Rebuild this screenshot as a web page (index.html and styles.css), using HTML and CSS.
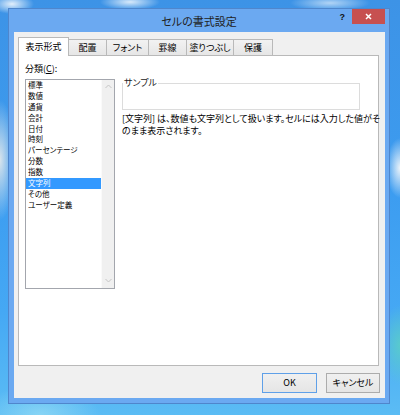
FILE: index.html
```html
<!DOCTYPE html>
<html lang="ja">
<head>
<meta charset="utf-8">
<title>セルの書式設定</title>
<link rel="stylesheet" href="styles.css">
</head>
<body>
<div class="desktop">
  <div class="window">
    <div class="titlebar">
      <div></div>
      <div class="title">セルの書式設定</div>
      <div class="controls">
        <span class="help">?</span>
        <div class="close">
          <svg width="7" height="7" viewBox="0 0 7 7"><path d="M1 1 L6 6 M6 1 L1 6" stroke="#fff" stroke-width="1.5" fill="none"/></svg>
        </div>
      </div>
    </div>
    <div class="client">
      <div class="tabs">
        <div class="tab active w51">表示形式</div>
        <div class="tab w39">配置</div>
        <div class="tab w43">フォント</div>
        <div class="tab w39">罫線</div>
        <div class="tab w48">塗りつぶし</div>
        <div class="tab w40">保護</div>
      </div>
      <div class="panel">
        <div class="left">
          <div class="label">分類(<u>C</u>):</div>
          <div class="listbox">
            <div class="items">
              <div class="item">標準</div>
              <div class="item">数値</div>
              <div class="item">通貨</div>
              <div class="item">会計</div>
              <div class="item">日付</div>
              <div class="item">時刻</div>
              <div class="item">パーセンテージ</div>
              <div class="item">分数</div>
              <div class="item">指数</div>
              <div class="item selected">文字列</div>
              <div class="item">その他</div>
              <div class="item">ユーザー定義</div>
            </div>
            <div class="scrollbar">
              <svg width="7" height="5" viewBox="0 0 7 5"><path d="M0.5 4 L3.5 1 L6.5 4" stroke="#c4c4c4" stroke-width="1" fill="none"/></svg>
              <svg width="7" height="5" viewBox="0 0 7 5"><path d="M0.5 1 L3.5 4 L6.5 1" stroke="#c4c4c4" stroke-width="1" fill="none"/></svg>
            </div>
          </div>
        </div>
        <div class="right">
          <fieldset class="sample">
            <legend>サンプル</legend>
            <div class="sample-body"></div>
          </fieldset>
          <p class="desc">[文字列] は、数値も文字列として扱います。セルには入力した値がそ<br>のまま表示されます。</p>
        </div>
      </div>
      <div class="buttons">
        <div class="btn default">OK</div>
        <div class="btn">キャンセル</div>
      </div>
    </div>
  </div>
</div>
</body>
</html>
```
FILE: styles.css
```css
html, body {
  margin: 0;
  padding: 0;
}
body {
  width: 400px;
  height: 415px;
  overflow: hidden;
  font-family: "Noto Sans CJK JP", "Noto Sans", sans-serif;
  font-feature-settings: "palt";
  color: #000;
}
.desktop {
  box-sizing: border-box;
  width: 400px;
  height: 415px;
  padding: 8px 0 0 8px;
  background:
    radial-gradient(ellipse 22px 10px at 12px 4px, rgba(255,255,255,0.85), rgba(255,255,255,0) 100%),
    radial-gradient(ellipse 30px 8px at 130px 2px, rgba(255,255,255,0.8), rgba(255,255,255,0) 100%),
    radial-gradient(ellipse 40px 8px at 330px 3px, rgba(255,255,255,0.6), rgba(255,255,255,0) 100%),
    radial-gradient(ellipse 16px 60px at 0px 160px, rgba(225,232,235,0.95), rgba(225,232,235,0) 100%),
    radial-gradient(ellipse 14px 30px at 400px 168px, rgba(245,248,250,0.95), rgba(245,248,250,0) 100%),
    radial-gradient(ellipse 20px 40px at 400px 345px, rgba(90,205,200,0.9), rgba(90,205,200,0) 100%),
    radial-gradient(ellipse 60px 30px at 40px 415px, rgba(140,215,245,0.9), rgba(140,215,245,0) 100%),
    linear-gradient(180deg, #3d93e6 0%, #3c9cf0 45%, #45a8f4 75%, #5bbcf4 100%);
}
.window {
  box-sizing: border-box;
  width: 382px;
  height: 396px;
  border: 1px solid #4f86cc;
  background: #6ba9f1;
  display: flex;
  flex-direction: column;
}
.titlebar {
  height: 23px;
  display: grid;
  grid-template-columns: 1fr auto 1fr;
  align-items: start;
}
.title {
  align-self: center;
  font-size: 11px;
  line-height: 14px;
  color: #222;
}
.controls {
  justify-self: end;
  display: flex;
  align-items: flex-start;
  padding-right: 4px;
}
.help {
  font-family: "Liberation Sans", sans-serif;
  font-weight: bold;
  font-size: 9px;
  line-height: 9px;
  color: #111;
  margin-top: 4px;
  margin-right: 7px;
}
.close {
  width: 33px;
  height: 15px;
  background: #c75050;
  display: flex;
  align-items: center;
  justify-content: center;
}
.close svg {
  display: block;
}
.client {
  margin: 0 4px 0 5px;
  height: 366px;
  background: #f0f0f0;
  display: flex;
  flex-direction: column;
}
.tabs {
  display: flex;
  align-items: flex-end;
  margin: 5px 0 0 4px;
  height: 18px;
}
.tab {
  box-sizing: border-box;
  height: 16px;
  border: 1px solid #b9b9b9;
  border-bottom: 0;
  background: linear-gradient(#f2f2f2, #e6e6e6);
  font-size: 9px;
  line-height: 15px;
  text-align: center;
  margin-left: -1px;
  white-space: nowrap;
}
.tab:first-child {
  margin-left: 0;
}
.tab.active {
  height: 19px;
  margin-bottom: -1px;
  background: #fff;
  position: relative;
  z-index: 1;
  line-height: 17px;
}
.w51 { width: 51px; }
.w39 { width: 39px; }
.w43 { width: 43px; }
.w48 { width: 48px; }
.w40 { width: 40px; }
.panel {
  box-sizing: border-box;
  margin-left: 4px;
  width: 361px;
  height: 311px;
  border: 1px solid #b9b9b9;
  background: #fff;
  padding: 6px 0 0 6px;
  display: flex;
  gap: 7px;
  align-items: flex-start;
}
.left {
  width: 90px;
}
.label {
  font-size: 9px;
  line-height: 14px;
  height: 14px;
}
.listbox {
  box-sizing: border-box;
  margin-top: 3px;
  width: 90px;
  height: 210px;
  border: 1px solid #a3a6ad;
  display: flex;
}
.items {
  flex: 1;
}
.item {
  height: 10.9px;
  line-height: 10.9px;
  font-size: 7.5px;
  padding-left: 2px;
  white-space: nowrap;
}
.item.selected {
  background: #3399ff;
  color: #fff;
}
.scrollbar {
  width: 12px;
  background: #f0f0f0;
  border-left: 1px solid #fafafa;
  display: flex;
  flex-direction: column;
  justify-content: space-between;
  align-items: center;
  padding: 4px 0 5px;
}
.scrollbar svg {
  display: block;
}
.right {
  width: 238px;
  margin-top: 15px;
}
.sample {
  margin: 0;
  padding: 0;
  border: 1px solid #dcdcdc;
}
.sample legend {
  padding: 0 1px;
  margin-left: 0;
  font-size: 9px;
  line-height: 12px;
  color: #222;
}
.sample-body {
  height: 20px;
}
.desc {
  margin: 3px 0 0;
  font-size: 9px;
  line-height: 12px;
  white-space: nowrap;
}
.buttons {
  display: flex;
  justify-content: flex-end;
  gap: 9px;
  margin-top: 7px;
  padding-right: 5px;
}
.btn {
  box-sizing: border-box;
  width: 54px;
  height: 20px;
  border: 1px solid #acacac;
  background: linear-gradient(#f0f0f0, #e5e5e5);
  font-size: 9px;
  line-height: 18px;
  text-align: center;
}
.btn.default {
  width: 55px;
  border-color: #5fa0e8;
}
```
